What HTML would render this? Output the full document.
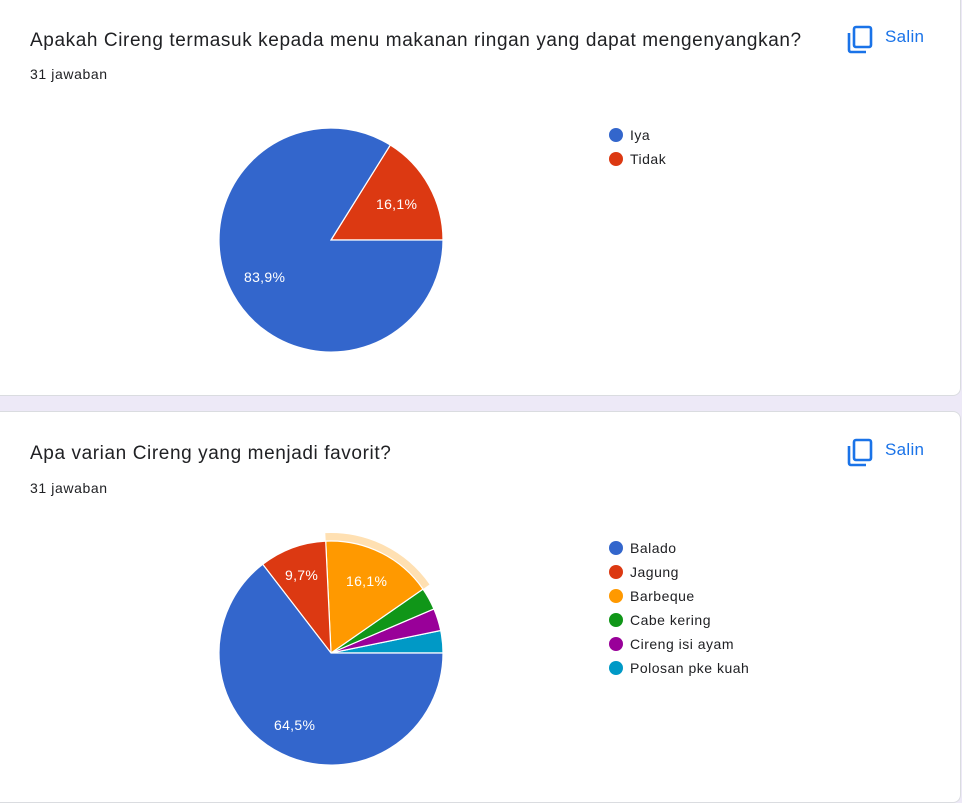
<!DOCTYPE html>
<html><head><meta charset="utf-8"><style>
body{margin:0;width:962px;height:787px;background:#ede9f7;font-family:"Liberation Sans",Arial,sans-serif;overflow:hidden;position:relative}
.card{position:absolute;left:-10px;width:969px;background:#fff;border-radius:8px;border:1px solid #dadce0}
.t{position:absolute;left:30px;font-size:19px;letter-spacing:0.6px;color:#202124}
.n{position:absolute;left:30px;font-size:14px;letter-spacing:0.6px;color:#202124}
.s{position:absolute;left:846px;color:#1a73e8;font-size:17px;letter-spacing:0.3px}
.s span{position:absolute;left:39px;top:2px}
.lg{position:absolute;left:609px;font-size:14px;letter-spacing:0.5px;color:#202124}
.lg div{height:24px;line-height:24px;position:relative;padding-left:21px}
.lg i{position:absolute;left:0;top:5px;width:14px;height:14px;border-radius:50%}
</style></head><body>
<div class="card" style="top:-10px;height:404px"></div>
<div class="card" style="top:411px;height:390px"></div>

<div class="t" style="top:30px">Apakah Cireng termasuk kepada menu makanan ringan yang dapat mengenyangkan?</div>
<div class="n" style="top:66px">31 jawaban</div>
<div class="s" style="top:25px"><svg width="28" height="30" viewBox="0 0 28 30"><rect x="8" y="2" width="17" height="20" rx="2" fill="none" stroke="#1a73e8" stroke-width="2.6"/><path d="M3 8v17a2 2 0 0 0 2 2h15" fill="none" stroke="#1a73e8" stroke-width="2.6"/></svg><span>Salin</span></div>

<div class="t" style="top:443px">Apa varian Cireng yang menjadi favorit?</div>
<div class="n" style="top:480px">31 jawaban</div>
<div class="s" style="top:438px"><svg width="28" height="30" viewBox="0 0 28 30"><rect x="8" y="2" width="17" height="20" rx="2" fill="none" stroke="#1a73e8" stroke-width="2.6"/><path d="M3 8v17a2 2 0 0 0 2 2h15" fill="none" stroke="#1a73e8" stroke-width="2.6"/></svg><span>Salin</span></div>

<svg style="position:absolute;left:0;top:0" width="962" height="787">
<g stroke="#fff" stroke-width="1.2">
<path d="M331 240 L443 240 A112 112 0 0 0 390.3 145 Z" fill="#dc3912"/>
<path d="M331 240 L390.3 145 A112 112 0 1 0 443 240 Z" fill="#3366cc"/>
</g>
<g font-size="14" fill="#fff" letter-spacing="0.3">
<text x="376" y="209">16,1%</text>
<text x="244" y="282">83,9%</text>
</g>
<path d="M429.5 584.5 A120 120 0 0 0 325.3 533.1 L325.7 541.1 A112 112 0 0 1 423 589.1 Z" fill="#ffe0b2"/>
<g stroke="#fff" stroke-width="1.2">
<path d="M331 653 L443 653 A112 112 0 0 0 440.7 630.5 Z" fill="#0099c6"/>
<path d="M331 653 L440.7 630.5 A112 112 0 0 0 433.9 608.9 Z" fill="#990099"/>
<path d="M331 653 L433.9 608.9 A112 112 0 0 0 423 589.1 Z" fill="#109618"/>
<path d="M331 653 L423 589.1 A112 112 0 0 0 325.7 541.1 Z" fill="#ff9900"/>
<path d="M331 653 L325.7 541.1 A112 112 0 0 0 262.7 564.3 Z" fill="#dc3912"/>
<path d="M331 653 L262.7 564.3 A112 112 0 1 0 443 653 Z" fill="#3366cc"/>
</g>
<g font-size="14" fill="#fff" letter-spacing="0.3">
<text x="285" y="580">9,7%</text>
<text x="346" y="586">16,1%</text>
<text x="274" y="730">64,5%</text>
</g>
</svg>

<div class="lg" style="top:123px">
<div><i style="background:#3366cc"></i>Iya</div>
<div><i style="background:#dc3912"></i>Tidak</div>
</div>
<div class="lg" style="top:536px">
<div><i style="background:#3366cc"></i>Balado</div>
<div><i style="background:#dc3912"></i>Jagung</div>
<div><i style="background:#ff9900"></i>Barbeque</div>
<div><i style="background:#109618"></i>Cabe kering</div>
<div><i style="background:#990099"></i>Cireng isi ayam</div>
<div><i style="background:#0099c6"></i>Polosan pke kuah</div>
</div>
</body></html>
